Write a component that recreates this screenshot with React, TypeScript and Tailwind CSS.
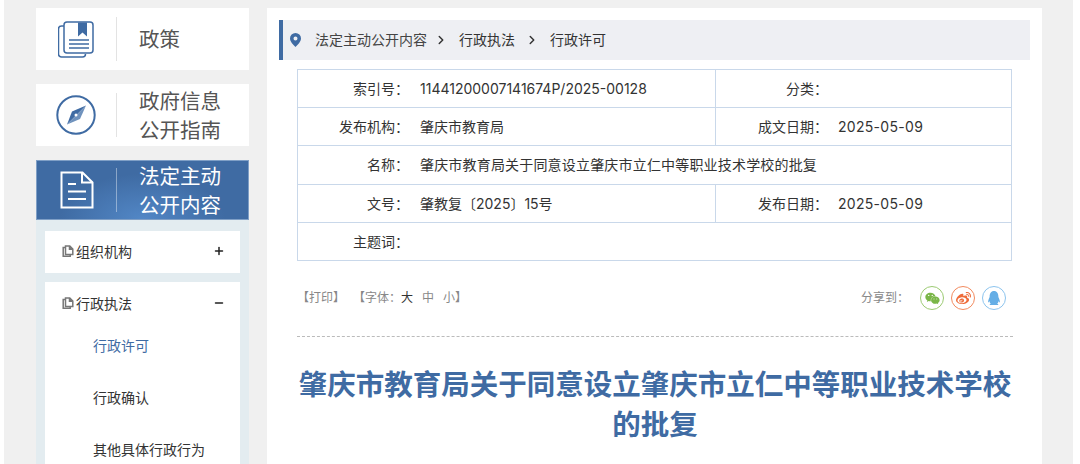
import { Plus, Minus, ChevronRight } from 'lucide-react';
import { FaWeixin, FaWeibo, FaQq } from 'react-icons/fa';

const font = { fontFamily: 'Inter, "Noto Sans CJK SC", "Liberation Sans", sans-serif' };

function BookIcon() {
  return (
    <svg width="36" height="37" viewBox="0 0 36 37" fill="none" stroke="#3f6ba3" strokeWidth="1.5">
      <path d="M6 5h-2.500a3 3 0 0 0-3 3v25a3 3 0 0 0 3 3h21a3 3 0 0 0 3-3" />
      <rect x="6" y="1" width="29" height="31" rx="3" />
      <path d="M20 1.500h9v14l-4.500-4-4.500 4z" fill="#3f6ba3" stroke="none" />
      <path d="M11 19h20M11 23h20M11 27h20" />
    </svg>
  );
}

function CompassIcon() {
  return (
    <svg width="40" height="40" viewBox="0 0 40 40">
      <circle cx="20" cy="20" r="18.700" fill="none" stroke="#3f6ba3" strokeWidth="2" />
      <path d="M30 10.500L16 16.500 11 29.500z" fill="#3f6ba3" />
      <path d="M30 10.500L24 24 11 29.500z" fill="#6f92bd" />
      <circle cx="20" cy="20" r="1.500" fill="#fff" />
    </svg>
  );
}

function DocIcon() {
  return (
    <svg width="34" height="38" viewBox="0 0 34 38" fill="none" stroke="#fff" strokeWidth="2">
      <path d="M1.500 1.500h21l10 10v25h-31z" />
      <path d="M22 1.500v10h10.500" />
      <path d="M8 13h8M8 20.500h18M8 28h18" />
    </svg>
  );
}

function CopyIcon() {
  return (
    <svg width="12" height="12" viewBox="0 0 12 12" fill="none" stroke="#777" strokeWidth="1.500">
      <path d="M3 2.500H1.200v8.800h7V9.500" />
      <path d="M3.500 1h4.300l3 3v5.500h-7.300z" fill="#fff" />
      <path d="M7.500 1v3.300h3.300" fill="#777" />
    </svg>
  );
}

function PinIcon() {
  return (
    <svg width="11" height="14" viewBox="0 0 11 14">
      <path fillRule="evenodd" d="M5.500 0a5.500 5.500 0 0 1 5.500 5.500c0 3-3 6-5.500 8.500C3 11.500 0 8.500 0 5.500A5.500 5.500 0 0 1 5.500 0zm0 3.500a2 2 0 1 0 0 4 2 2 0 0 0 0-4z" fill="#3f6ba3" />
    </svg>
  );
}

function NavCard({ icon, lines, active }: { icon: React.ReactNode; lines: string[]; active?: boolean }) {
  return (
    <div className={active ? 'flex h-[60px] items-center border border-[#7f9fc6] bg-[radial-gradient(ellipse_at_50%_100%,#5287c6_0%,#3f6ba3_55%)] text-white' : 'flex h-[62px] items-center bg-white text-[#555]'}>
      <div className={active ? 'flex w-[79px] justify-center' : 'flex w-[80px] justify-center'}>{icon}</div>
      <div className={active ? 'h-[44px] w-px bg-white/40' : 'h-[44px] w-px bg-[#e3e3e3]'} />
      <div className={active ? 'pl-[22px] pt-[2px] text-[20.5px] leading-[29px]' : 'pl-[22px] pt-[1px] text-[20.5px] leading-[29px]'}>
        {lines.map((l) => <div key={l}>{l}</div>)}
      </div>
    </div>
  );
}

const rows: { a: string; b: string; c?: string; d?: string }[] = [
  { a: '索引号：', b: '11441200007141674P/2025-00128', c: '分类：', d: '' },
  { a: '发布机构：', b: '肇庆市教育局', c: '成文日期：', d: '2025-05-09' },
  { a: '名称：', b: '肇庆市教育局关于同意设立肇庆市立仁中等职业技术学校的批复' },
  { a: '文号：', b: '肇教复〔2025〕15号', c: '发布日期：', d: '2025-05-09' },
  { a: '主题词：', b: '' },
];

export default function App() {
  return (
    <div style={font} className="h-[464px] w-[1080px] overflow-hidden bg-white pl-[4px] pr-[7px]">
      <div className="flex h-full gap-[18px] bg-[#f0f0f0] pl-[32px] pr-[31px] pt-2">
        {/* sidebar */}
        <aside className="flex w-[213px] shrink-0 flex-col">
          <div className="flex flex-col gap-[14px]">
            <NavCard icon={<BookIcon />} lines={['政策']} />
            <NavCard icon={<CompassIcon />} lines={['政府信息', '公开指南']} />
            <NavCard active icon={<DocIcon />} lines={['法定主动', '公开内容']} />
          </div>
          <div className="flex-1 bg-[#e3ecf0] px-[9px] pt-[11px]">
            <div className="flex h-[42px] items-center justify-between bg-white pb-[2px] pl-[17px] pr-[15px] text-[14px] text-[#333]">
              <span className="flex items-center gap-[2px]"><CopyIcon />组织机构</span>
              <Plus size={12} strokeWidth={3} color="#222" />
            </div>
            <div className="mt-[9px] h-[300px] bg-white pl-[17px] pr-[15px] text-[14px] text-[#333]">
              <div className="flex h-[42px] items-center justify-between">
                <span className="flex items-center gap-[2px]"><CopyIcon />行政执法</span>
                <Minus size={12} strokeWidth={3} color="#222" />
              </div>
              <div className="flex flex-col gap-[30px] pl-[31px] pt-[11px] leading-[22px]">
                <span className="text-[#3f6ba3]">行政许可</span>
                <span>行政确认</span>
                <span>其他具体行政行为</span>
              </div>
            </div>
          </div>
        </aside>

        {/* main */}
        <main className="flex-1 bg-white pl-3 pr-3 pt-3">
          <div className="flex h-[40px] items-center border-l-4 border-[#3f6ba3] bg-[#eeeff3] pb-[1px] pl-[7px] text-[14px]">
            <PinIcon />
            <span className="ml-[14px] pb-[1px] text-[#444]">法定主动公开内容</span>
            <ChevronRight size={14} strokeWidth={2.500} color="#333" className="ml-[7px]" />
            <span className="ml-[11px] pb-[1px] text-[#333]">行政执法</span>
            <ChevronRight size={14} strokeWidth={2.500} color="#333" className="ml-[10px]" />
            <span className="ml-[11px] pb-[1px] text-[#333]">行政许可</span>
          </div>

          <div className="ml-[18px] mt-[9px] w-[715px] border border-[#c9d8ea] text-[14px] text-[#333]">
            {rows.map((r, i) => (
              <div key={r.a} className={i < rows.length - 1 ? 'flex h-[38.2px] items-center border-b border-[#c9d8ea]' : 'flex h-[37.2px] items-center'}>
                <div className="w-[111px] text-right">{r.a}</div>
                <div className={r.c ? 'h-full w-[306px] pl-[11px] leading-[37px]' : 'h-full flex-1 pl-[11px] leading-[37px] tracking-[0.18px]'}>{r.b}</div>
                {r.c && (
                  <div className="flex h-full flex-1 items-center border-l border-[#c9d8ea]">
                    <div className="w-[112px] text-right">{r.c}</div>
                    <div className="pl-[10px] tracking-[0.3px]">{r.d}</div>
                  </div>
                )}
              </div>
            ))}
          </div>

          <div className="ml-[18px] flex h-[76px] w-[716px] items-center justify-between border-b border-dashed border-[#bbb] pr-[7px] text-[12px] text-[#888]">
            <div className="flex items-center">
              <span>【打印】</span>
              <span className="ml-[8px]">【字体：</span>
              <span className="text-[#333]">大</span>
              <span className="ml-[9px]">中</span>
              <span className="ml-[9px]">小】</span>
            </div>
            <div className="flex items-center">
              <span className="mr-[11px]">分享到：</span>
              <div className="flex gap-[7px]">
                <span className="flex h-6 w-6 items-center justify-center rounded-full border border-[#9ccb73] text-[#7ab648]"><FaWeixin size={15} /></span>
                <span className="flex h-6 w-6 items-center justify-center rounded-full border border-[#f28a5e] text-[#ee6c3a]"><FaWeibo size={15} /></span>
                <span className="flex h-6 w-6 items-center justify-center rounded-full border border-[#8cc4ee] text-[#64aee6]"><FaQq size={14} /></span>
              </div>
            </div>
          </div>

          <h1 className="ml-[18px] mt-[28px] w-[716px] text-center text-[28.5px] font-bold leading-[40px] text-[#3f6ba3]">
            肇庆市教育局关于同意设立肇庆市立仁中等职业技术学校的批复
          </h1>
        </main>
      </div>
    </div>
  );
}
